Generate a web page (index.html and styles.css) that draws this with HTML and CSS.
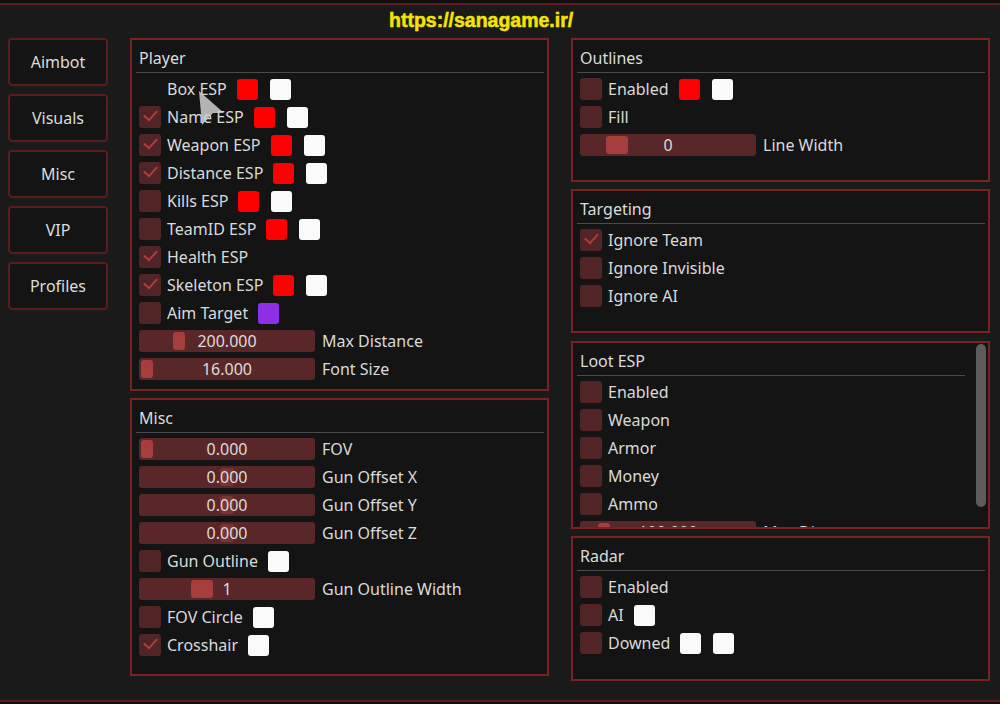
FILE: index.html
```html
<!DOCTYPE html>
<html>
<head>
<meta charset="utf-8">
<link rel="stylesheet" href="styles.css">
</head>
<body>
<div class="window">
  <div class="header"><span class="url">https://sanagame.ir/</span></div>
  <div class="main">
    <nav class="sidebar">
      <div class="tab">Aimbot</div>
      <div class="tab">Visuals</div>
      <div class="tab">Misc</div>
      <div class="tab">VIP</div>
      <div class="tab">Profiles</div>
    </nav>
    <div class="col">
      <section class="panel p-player">
        <div class="title">Player</div>
        <div class="sep"></div>
        <div class="rows">
          <div class="row"><span class="cb blank"></span><span class="lbl">Box ESP</span><span class="sw red"></span><span class="sw white"></span></div>
          <div class="row"><span class="cb on"></span><span class="lbl">Name ESP</span><span class="sw red"></span><span class="sw white"></span></div>
          <div class="row"><span class="cb on"></span><span class="lbl">Weapon ESP</span><span class="sw red"></span><span class="sw white"></span></div>
          <div class="row"><span class="cb on"></span><span class="lbl">Distance ESP</span><span class="sw red"></span><span class="sw white"></span></div>
          <div class="row"><span class="cb"></span><span class="lbl">Kills ESP</span><span class="sw red"></span><span class="sw white"></span></div>
          <div class="row"><span class="cb"></span><span class="lbl">TeamID ESP</span><span class="sw red"></span><span class="sw white"></span></div>
          <div class="row"><span class="cb on"></span><span class="lbl">Health ESP</span></div>
          <div class="row"><span class="cb on"></span><span class="lbl">Skeleton ESP</span><span class="sw red"></span><span class="sw white"></span></div>
          <div class="row"><span class="cb"></span><span class="lbl">Aim Target</span><span class="sw purple"></span></div>
          <div class="row"><div class="slider"><span class="grab" style="left:34px"></span><span class="val">200.000</span></div><span class="slbl">Max Distance</span></div>
          <div class="row"><div class="slider"><span class="grab" style="left:2px"></span><span class="val">16.000</span></div><span class="slbl">Font Size</span></div>
        </div>
      </section>
      <section class="panel p-misc">
        <div class="title">Misc</div>
        <div class="sep"></div>
        <div class="rows">
          <div class="row"><div class="slider"><span class="grab" style="left:2px"></span><span class="val">0.000</span></div><span class="slbl">FOV</span></div>
          <div class="row"><div class="slider"><span class="grab soft" style="left:81px"></span><span class="val">0.000</span></div><span class="slbl">Gun Offset X</span></div>
          <div class="row"><div class="slider"><span class="grab soft" style="left:81px"></span><span class="val">0.000</span></div><span class="slbl">Gun Offset Y</span></div>
          <div class="row"><div class="slider"><span class="grab soft" style="left:81px"></span><span class="val">0.000</span></div><span class="slbl">Gun Offset Z</span></div>
          <div class="row"><span class="cb"></span><span class="lbl">Gun Outline</span><span class="sw white"></span></div>
          <div class="row"><div class="slider"><span class="grab wide" style="left:52px"></span><span class="val">1</span></div><span class="slbl">Gun Outline Width</span></div>
          <div class="row"><span class="cb"></span><span class="lbl">FOV Circle</span><span class="sw white"></span></div>
          <div class="row"><span class="cb on"></span><span class="lbl">Crosshair</span><span class="sw white"></span></div>
        </div>
      </section>
    </div>
    <div class="col">
      <section class="panel p-outlines">
        <div class="title">Outlines</div>
        <div class="sep"></div>
        <div class="rows">
          <div class="row"><span class="cb"></span><span class="lbl">Enabled</span><span class="sw red"></span><span class="sw white"></span></div>
          <div class="row"><span class="cb"></span><span class="lbl">Fill</span></div>
          <div class="row"><div class="slider"><span class="grab wide" style="left:26px"></span><span class="val">0</span></div><span class="slbl">Line Width</span></div>
        </div>
      </section>
      <section class="panel p-target">
        <div class="title">Targeting</div>
        <div class="sep"></div>
        <div class="rows">
          <div class="row"><span class="cb on"></span><span class="lbl">Ignore Team</span></div>
          <div class="row"><span class="cb"></span><span class="lbl">Ignore Invisible</span></div>
          <div class="row"><span class="cb"></span><span class="lbl">Ignore AI</span></div>
        </div>
      </section>
      <section class="panel p-loot">
        <div class="title">Loot ESP</div>
        <div class="sep short"></div>
        <div class="rows">
          <div class="row"><span class="cb"></span><span class="lbl">Enabled</span></div>
          <div class="row"><span class="cb"></span><span class="lbl">Weapon</span></div>
          <div class="row"><span class="cb"></span><span class="lbl">Armor</span></div>
          <div class="row"><span class="cb"></span><span class="lbl">Money</span></div>
          <div class="row"><span class="cb"></span><span class="lbl">Ammo</span></div>
          <div class="row"><div class="slider"><span class="grab" style="left:18px"></span><span class="val">100.000</span></div><span class="slbl">Max Distance</span></div>
        </div>
        <div class="scrollbar"></div>
      </section>
      <section class="panel p-radar">
        <div class="title">Radar</div>
        <div class="sep"></div>
        <div class="rows">
          <div class="row"><span class="cb"></span><span class="lbl">Enabled</span></div>
          <div class="row"><span class="cb"></span><span class="lbl">AI</span><span class="sw white"></span></div>
          <div class="row"><span class="cb"></span><span class="lbl">Downed</span><span class="sw white"></span><span class="sw white"></span></div>
        </div>
      </section>
    </div>
  </div>
</div>
<svg class="cursor" width="30" height="38" viewBox="0 0 30 38"><polygon points="1,1 26,23 15,23 4,35" fill="#cfcfcf" fill-opacity="0.85"/></svg>
</body>
</html>
```
FILE: styles.css
```css
html, body {
  margin: 0;
  padding: 0;
}
body {
  width: 1000px;
  height: 704px;
  overflow: hidden;
  background: #120d0d;
  font-family: "Noto Sans", "Open Sans", sans-serif;
  font-size: 16px;
  color: #dadada;
  position: relative;
}
.window {
  margin-top: 3px;
  height: 699px;
  box-sizing: border-box;
  border-top: 2px solid #5e1c1c;
  border-bottom: 2px solid #5e1c1c;
  background: #1a1a1a;
}
.header {
  height: 33px;
  box-sizing: border-box;
  padding-left: 389px;
  padding-top: 3px;
}
.url {
  font-family: "Liberation Sans", Arial, sans-serif;
  font-weight: bold;
  font-size: 19.5px;
  color: #f4e400;
  line-height: 24px;
  -webkit-text-stroke: 0.5px #f4e400;
}
.main {
  display: flex;
  padding-left: 8px;
}
.sidebar {
  width: 100px;
  flex: none;
  display: flex;
  flex-direction: column;
  gap: 8px;
  margin-right: 22px;
}
.tab {
  height: 48px;
  box-sizing: border-box;
  border: 2px solid #5a1c1c;
  border-radius: 4px;
  background: #141414;
  display: flex;
  align-items: center;
  justify-content: center;
  color: #dcdcdc;
}
.col {
  width: 419px;
  flex: none;
  display: flex;
  flex-direction: column;
  gap: 7px;
}
.col + .col { margin-left: 22px; }
.panel {
  position: relative;
  box-sizing: border-box;
  border: 2px solid #7a2222;
  background: #141414;
  padding: 0 5px 0 7px;
  overflow: hidden;
  flex: none;
}
.p-player { height: 353px; }
.p-misc { height: 278px; }
.p-outlines { height: 144px; }
.p-target { height: 144px; }
.p-loot { height: 188px; margin-top: 1px; }
.p-radar { height: 145px; }
.title {
  padding-top: 8px;
  height: 20px;
  line-height: 20px;
  margin-bottom: 4px;
  color: #dcdcdc;
}
.sep {
  height: 1px;
  background: #4a4a4a;
  margin: 0 -2px 0 -3px;
}
.sep.short { margin-right: 18px; }
.rows {
  padding-top: 5px;
  display: flex;
  flex-direction: column;
  gap: 6px;
}
.row {
  height: 22px;
  display: flex;
  align-items: center;
}
.cb {
  width: 22px;
  height: 22px;
  border-radius: 3px;
  background: #512525;
  margin-right: 6px;
  flex: none;
  position: relative;
}
.cb.blank { background: transparent; }
.cb.on::after {
  content: "";
  position: absolute;
  left: 5px;
  top: 4px;
  width: 11px;
  height: 6px;
  border-left: 2px solid #b23c3c;
  border-bottom: 2px solid #b23c3c;
  transform: rotate(-48deg);
  transform-origin: center;
}
.lbl {
  line-height: 22px;
  white-space: nowrap;
}
.sw {
  width: 21px;
  height: 21px;
  border-radius: 3px;
  margin-left: 10px;
  flex: none;
}
.sw + .sw { margin-left: 12px; }
.red { background: #ff0000; }
.white { background: #fafafa; }
.purple { background: #8c2fe6; }
.slider {
  position: relative;
  width: 176px;
  height: 22px;
  border-radius: 3px;
  background: #592727;
  flex: none;
  display: flex;
  align-items: center;
  justify-content: center;
}
.grab {
  position: absolute;
  top: 2px;
  width: 12px;
  height: 18px;
  border-radius: 3px;
  background: #a63e3e;
}
.grab.wide { width: 22px; }
.grab.soft { background: #7a3434; width: 14px; }
.val {
  position: relative;
  color: #dcdcdc;
  line-height: 22px;
}
.slbl {
  margin-left: 7px;
  white-space: nowrap;
}
.scrollbar {
  position: absolute;
  right: 2px;
  top: 1px;
  width: 10px;
  height: 163px;
  border-radius: 5px;
  background: #5c5c5c;
}
.cursor {
  position: absolute;
  left: 198px;
  top: 90px;
}
```
